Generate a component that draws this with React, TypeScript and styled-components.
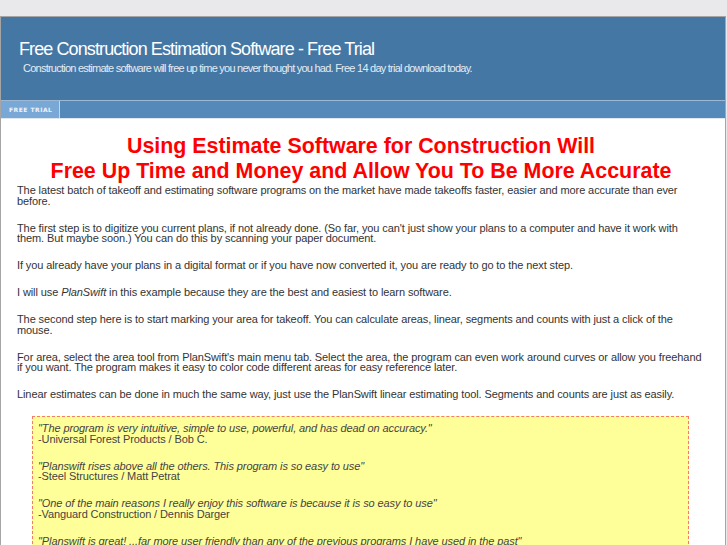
import styled, { createGlobalStyle } from 'styled-components';

const GlobalStyle = createGlobalStyle`
  html, body {
    margin: 0;
    padding: 0;
    background: #e9e9eb;
  }
  body {
    padding-top: 16px;
    font-family: "Liberation Sans", Arial, sans-serif;
    overflow: hidden;
  }
`;

const Page = styled.div`
  width: 724px;
  border: 1px solid #a5a5a5;
  border-bottom: none;
  background: #fff;
`;

const Header = styled.div`
  background: #4577a5;
  height: 84px;
  padding: 21px 0 0 18px;
  box-sizing: border-box;
  border-bottom: 1px solid #9cb8d2;
  color: #fff;
`;

const SiteTitle = styled.h1`
  margin: 0;
  font-size: 18px;
  font-weight: normal;
  letter-spacing: -0.9px;
  line-height: 22px;
`;

const SiteSlogan = styled.div`
  margin: 1px 0 0 4px;
  font-size: 11px;
  letter-spacing: -0.76px;
  line-height: 14px;
  color: #e4ecf4;
`;

const NavBar = styled.div`
  display: flex;
  height: 17px;
  background: #5489ba;
  border-bottom: 1px solid #dfe7ef;
`;

const NavTab = styled.a<{ active?: boolean }>`
  display: flex;
  align-items: center;
  padding: 0 8px;
  width: 59px;
  box-sizing: border-box;
  white-space: nowrap;
  background: ${p => (p.active ? '#7aa8d6' : 'transparent')};
  border-right: 1px solid #c3d6ea;
  color: #eef4fa;
  font-family: "DejaVu Sans", sans-serif;
  font-size: 6px;
  font-weight: bold;
  letter-spacing: 0.5px;
  text-decoration: none;
`;

const Content = styled.div`
  padding: 15px 20px 0 16px;
  color: #333;
`;

const Headline = styled.h2`
  margin: 0 0 1px;
  text-align: center;
  color: #f00;
  font-size: 21.4px;
  line-height: 25px;
  font-weight: bold;
`;

const Para = styled.p`
  margin: 0 0 16.5px;
  font-size: 11px;
  line-height: 10.5px;
  letter-spacing: -0.1px;
`;

const Testimonials = styled.div`
  margin: 6px 16px 0 15px;
  padding: 6px 5px 0;
  background: #ffff99;
  border: 1px dashed #f57c6b;
`;

const Quote = styled.p`
  margin: 0 0 16.5px;
  font-size: 11px;
  line-height: 10.5px;
  letter-spacing: -0.1px;
  color: #444;

  em {
    display: block;
  }
`;

const testimonials = [
  {
    text: '"The program is very intuitive, simple to use, powerful, and has dead on accuracy."',
    by: '-Universal Forest Products / Bob C.',
  },
  {
    text: '"Planswift rises above all the others. This program is so easy to use"',
    by: '-Steel Structures / Matt Petrat',
  },
  {
    text: '"One of the main reasons I really enjoy this software is because it is so easy to use"',
    by: '-Vanguard Construction / Dennis Darger',
  },
  {
    text: '"Planswift is great! ...far more user friendly than any of the previous programs I have used in the past"',
    by: '-General Contractor / Mike S.',
  },
];

export default function App() {
  return (
    <>
      <GlobalStyle />
      <Page>
        <Header>
          <SiteTitle>Free Construction Estimation Software - Free Trial</SiteTitle>
          <SiteSlogan>
            Construction estimate software will free up time you never thought you had. Free 14 day trial download today.
          </SiteSlogan>
        </Header>
        <NavBar>
          <NavTab active href="#">FREE TRIAL</NavTab>
        </NavBar>
        <Content>
          <Headline>
            Using Estimate Software for Construction Will
            <br />
            Free Up Time and Money and Allow You To Be More Accurate
          </Headline>
          <Para>
            The latest batch of takeoff and estimating software programs on the market have made takeoffs faster, easier and more accurate than ever before.
          </Para>
          <Para>
            The first step is to digitize you current plans, if not already done. (So far, you can't just show your plans to a computer and have it work with them. But maybe soon.) You can do this by scanning your paper document.
          </Para>
          <Para>
            If you already have your plans in a digital format or if you have now converted it, you are ready to go to the next step.
          </Para>
          <Para>
            I will use <em>PlanSwift</em> in this example because they are the best and easiest to learn software.
          </Para>
          <Para>
            The second step here is to start marking your area for takeoff. You can calculate areas, linear, segments and counts with just a click of the mouse.
          </Para>
          <Para>
            For area, select the area tool from PlanSwift's main menu tab. Select the area, the program can even work around curves or allow you freehand if you want. The program makes it easy to color code different areas for easy reference later.
          </Para>
          <Para>
            Linear estimates can be done in much the same way, just use the PlanSwift linear estimating tool. Segments and counts are just as easily.
          </Para>
          <Testimonials>
            {testimonials.map(t => (
              <Quote key={t.by}>
                <em>{t.text}</em>
                {t.by}
              </Quote>
            ))}
          </Testimonials>
        </Content>
      </Page>
    </>
  );
}
